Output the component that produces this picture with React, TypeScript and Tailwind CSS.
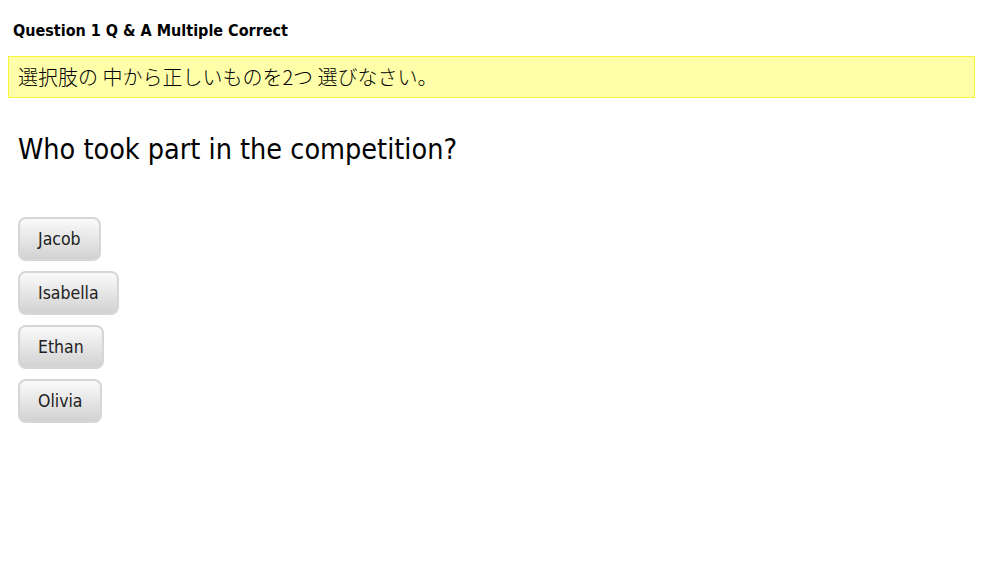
import React from "react";

const names = ["Jacob", "Isabella", "Ethan", "Olivia"];

export default function App() {
  return (
    <div className="min-h-[564px] bg-white p-2 text-black">
      <div className="pl-[5px] pt-[12px] font-['DejaVu_Sans_Condensed','DejaVu_Sans',sans-serif] text-[16px] font-bold leading-[21px]">
        Question 1 Q &amp; A Multiple Correct
      </div>
      <div className="mt-[15px] flex h-[42px] items-center border border-[#f5f53c] bg-[#ffffaa] pl-[9px] font-['Noto_Sans_CJK_JP',sans-serif] text-[20px] font-light leading-none text-black">
        選択肢の 中から正しいものを2つ 選びなさい。
      </div>
      <div className="mt-[35px] pl-[10px] font-['DejaVu_Sans_Condensed','DejaVu_Sans',sans-serif] text-[28.5px] leading-[33px]">
        Who took part in the competition?
      </div>
      <div className="mt-[51px] flex flex-col items-start gap-[10px] pl-[10px]">
        {names.map((n) => (
          <button
            key={n}
            className="h-[44px] rounded-[8px] border-2 border-[#d6d6d6] bg-gradient-to-b from-[#fafafa] to-[#d2d2d2] px-[18px] font-['DejaVu_Sans_Condensed','DejaVu_Sans',sans-serif] text-[17.5px] text-[#222]"
          >
            {n}
          </button>
        ))}
      </div>
    </div>
  );
}
